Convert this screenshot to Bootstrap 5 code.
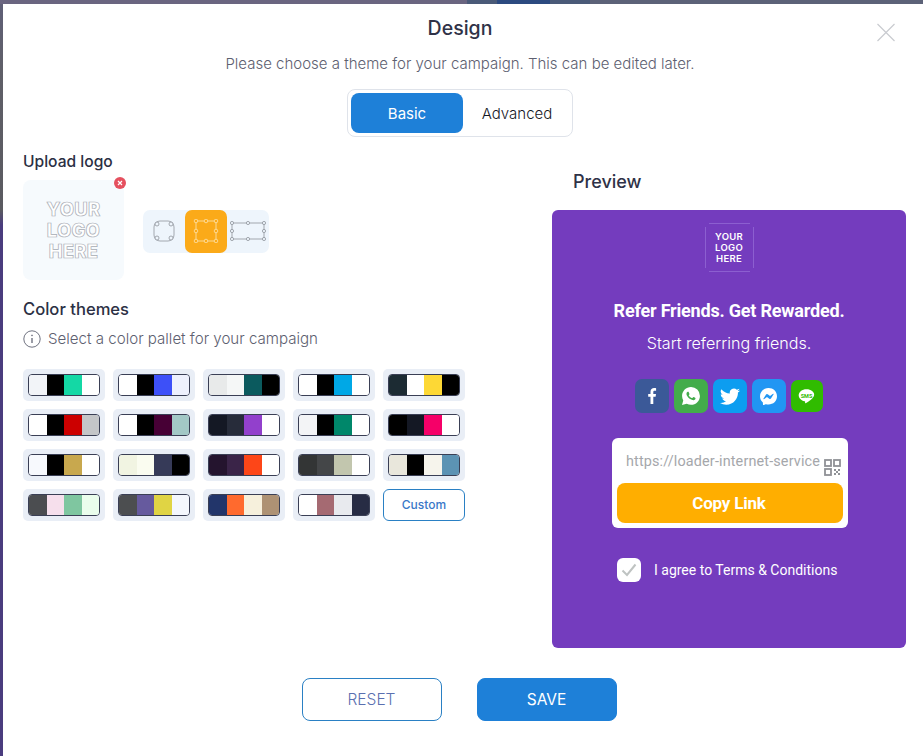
<!DOCTYPE html>
<html lang="en">
<head>
    <meta charset="UTF-8">
    <title>Design</title>
    <link href="https://cdn.jsdelivr.net/npm/bootstrap@5.3.0/dist/css/bootstrap.min.css" rel="stylesheet">
    <style>
        html, body { height: 756px; overflow: hidden; }
        body {
            font-family: Inter, "Liberation Sans", sans-serif;
            background: linear-gradient(to bottom, #5f5f78 0, #5f5f68 70px, #5a5a60 210px, #4a3c7e 225px, #4a3c7e 100%);
        }
        .top-band {
            height: 4px;
            background: linear-gradient(to right, #6a6580 0, #6a6580 467px, #4a5a78 467px, #4a5a78 497px, #2c4a80 497px, #2c4a80 550px, #4a5a78 550px, #4a5a78 590px, #5c6278 590px, #5c6278 100%);
        }
        .dialog { margin-left: 3px; height: 752px; background: #fff; }
        .dialog-head { padding-right: 6px; }
        .dialog-title { font-size: 19.500px; font-weight: 500; line-height: 24px; color: #2f3247; padding-top: 12px; margin: 0; }
        .dialog-sub { font-size: 15px; line-height: 22px; font-weight: 300; color: #5d6070; margin: 13px 0 0; }
        .close-x { position: absolute; right: 27px; top: 18px; width: 20px; height: 20px; }
        .mode-toggle { width: 226px; height: 48px; margin-top: 14px; padding: 3px; border: 1px solid #dfe3ea; border-radius: 8px; }
        .mode-toggle .btn { height: 40px; padding: 2px 0 0; font-size: 15px; font-weight: 300; border: 0; border-radius: 8px; color: #16181f; }
        .mode-toggle .btn.is-on { flex: 0 0 112px; background: #1e80d8; color: #fff; font-weight: 400; }
        .mode-toggle .btn:not(.is-on) { flex: 0 0 108px; }
        .dialog-main { margin-top: 14px; padding: 0 17px 0 20px; height: 497px; }
        .sect-title { font-size: 15.600px; font-weight: 500; line-height: 20px; color: #2b3044; margin: 0; }
        .upload-title { padding-top: 1px; margin-bottom: 8px; }
        .color-title { margin-top: 19px; font-size: 16.600px; }
        .logo-drop { position: relative; width: 101px; height: 100px; background: #f6fafd; border-radius: 8px; }
        .logo-ghost {
            font-weight: 800; font-size: 18.500px; line-height: 21px; letter-spacing: .2px; text-align: center;
            color: #fff; -webkit-text-stroke: .7px #a8acb4;
        }
        .logo-remove { position: absolute; right: -2px; top: -3px; width: 12px; height: 12px; }
        .shape-pick { width: 126px; height: 43px; margin: 2px 0 0 19px; background: #eef5fc; border-radius: 7px; }
        .shape-opt { width: 42px; height: 43px; border-radius: 7px; }
        .shape-opt.is-on { background: #fbaa19; }
        .info-line { font-size: 15.100px; font-weight: 300; line-height: 20px; color: #5d6070; margin-top: 10px; gap: 7px; }
        .swatch-grid { display: grid; grid-template-columns: repeat(5, 82px); grid-auto-rows: 32px; gap: 8px; margin-top: 20px; }
        .swatch-item { padding: 5px; background: #e9eef6; border-radius: 5px; }
        .swatch-bar { display: flex; height: 22px; overflow: hidden; border: 1px solid #3a3f55; border-radius: 4px; }
        .swatch-bar span { flex: 1; }
        .custom-btn { padding: 0; font-size: 12px; font-weight: 500; color: #3a78c8; border: 1px solid #2a80c4; border-radius: 6px; background: #fff; }
        .preview-col { width: 354px; padding-top: 21px; }
        .preview-title { font-size: 18px; font-weight: 500; line-height: 20px; color: #2f3247; margin: 0 0 18px 21px; }
        .preview-box { height: 438px; padding-top: 13px; background: #743cbe; border-radius: 6px; color: #fff; font-family: Roboto, sans-serif; }
        .logo-mini {
            width: 49px; height: 49px; font-family: Inter, sans-serif; font-weight: 600; font-size: 9.500px; line-height: 11px; letter-spacing: .3px;
            background:
                linear-gradient(#8c5fd0, #8c5fd0) 4px 0 / 41px 1px no-repeat,
                linear-gradient(#8c5fd0, #8c5fd0) 4px 100% / 41px 1px no-repeat,
                linear-gradient(#8c5fd0, #8c5fd0) 0 4px / 1px 41px no-repeat,
                linear-gradient(#8c5fd0, #8c5fd0) 100% 4px / 1px 41px no-repeat;
        }
        .preview-head { font-size: 18px; font-weight: 700; line-height: 24px; margin: 27px 0 0; letter-spacing: -.2px; }
        .preview-sub { font-family: Inter, sans-serif; font-size: 16.100px; font-weight: 300; line-height: 22px; margin: 9px 0 0; }
        .share-row { gap: 5px; margin-top: 25px; height: 34px; padding-right: 1px; }
        .share-btn { width: 34px; height: 34px; border-radius: 7px; }
        .share-btn svg { display: block; }
        .share-sms { width: 32px; height: 32px; }
        .link-box { position: relative; width: 236px; height: 90px; margin: 25px 0 0 2px; padding: 5px; background: #fff; border-radius: 6px; }
        .link-text { width: 206px; height: 40px; padding-left: 9px; overflow: hidden; white-space: nowrap; font-size: 14.400px; line-height: 38px; letter-spacing: .15px; color: #a5a7ab; }
        .qr-icon { position: absolute; right: 7px; top: 21px; }
        .copy-btn { width: 226px; height: 40px; padding: 2px 2px 0 0; font-size: 17px; font-weight: 700; letter-spacing: -.2px; color: #fff; background: #ffae00; border: 0; border-radius: 8px; }
        .agree-row { margin: 30px 0 0 65px; gap: 13px; font-size: 14px; }
        .agree-box { width: 24px; height: 24px; background: #fff; border-radius: 6px; }
        .foot-btns { gap: 35px; margin-top: 30px; padding-right: 8px; }
        .foot-btns .btn { width: 140px; height: 43px; padding: 0; font-size: 15.500px; border-radius: 8px; }
        .btn-reset { color: #5a70b0; border: 1px solid #2a80c4; background: #fff; font-weight: 300; }
        .btn-save { color: #fff; background: #1e80d8; border: 1px solid #1e80d8; }
    </style>
</head>
<body>

<div class="top-band"></div>
<div class="dialog position-relative">
    <div class="dialog-head d-flex flex-column align-items-center text-center">
        <h1 class="dialog-title">Design</h1>
        <p class="dialog-sub">Please choose a theme for your campaign. This can be edited later.</p>
        <div class="mode-toggle d-flex">
            <button type="button" class="btn is-on">Basic</button>
            <button type="button" class="btn">Advanced</button>
        </div>
    </div>
    <svg class="close-x" viewBox="0 0 20 20" fill="none" stroke="#c9cbd0" stroke-width="1.2"><path d="M1.500 2 18.500 19M18.500 2 1.500 19"/></svg>

    <div class="dialog-main d-flex justify-content-between">
        <div>
            <h2 class="sect-title upload-title">Upload logo</h2>
            <div class="d-flex align-items-center">
                <div class="logo-drop d-flex align-items-center justify-content-center">
                    <div class="logo-ghost">YOUR<br>LOGO<br>HERE</div>
                    <svg class="logo-remove" viewBox="0 0 12 12"><circle cx="6" cy="6" r="6" fill="#e5505f"/><path d="M4 4l4 4M8 4l-4 4" stroke="#fff" stroke-width="1.2"/></svg>
                </div>
                <div class="shape-pick d-flex">
                    <div class="shape-opt d-flex align-items-center justify-content-center">
                        <svg width="24" height="24" viewBox="0 0 24 24" fill="none" stroke="#8f949c" stroke-width=".8">
                            <rect x="2" y="2" width="20" height="20" rx="6"/>
                            <g fill="#eef5fc"><circle cx="5" cy="5" r="2"/><circle cx="19" cy="5" r="2"/><circle cx="5" cy="19" r="2"/><circle cx="19" cy="19" r="2"/></g>
                        </svg>
                    </div>
                    <div class="shape-opt is-on d-flex align-items-center justify-content-center">
                        <svg width="26" height="24" viewBox="0 0 26 24" fill="none" stroke="#fde3ae" stroke-width=".8">
                            <rect x="3" y="2" width="20" height="20"/>
                            <g fill="#fbaa19"><circle cx="3" cy="2" r="1.800"/><circle cx="13" cy="2" r="1.800"/><circle cx="23" cy="2" r="1.800"/><circle cx="3" cy="12" r="1.800"/><circle cx="23" cy="12" r="1.800"/><circle cx="3" cy="22" r="1.800"/><circle cx="13" cy="22" r="1.800"/><circle cx="23" cy="22" r="1.800"/></g>
                        </svg>
                    </div>
                    <div class="shape-opt d-flex align-items-center justify-content-center">
                        <svg width="36" height="22" viewBox="0 0 36 22" fill="none" stroke="#8f949c" stroke-width=".8">
                            <rect x="2" y="3" width="32" height="16"/>
                            <g fill="#eef5fc"><circle cx="2" cy="3" r="1.600"/><circle cx="18" cy="3" r="1.600"/><circle cx="34" cy="3" r="1.600"/><circle cx="2" cy="11" r="1.600"/><circle cx="34" cy="11" r="1.600"/><circle cx="2" cy="19" r="1.600"/><circle cx="18" cy="19" r="1.600"/><circle cx="34" cy="19" r="1.600"/></g>
                        </svg>
                    </div>
                </div>
            </div>
            <h2 class="sect-title color-title">Color themes</h2>
            <div class="info-line d-flex align-items-center">
                <svg width="18" height="18" viewBox="0 0 18 18" fill="none" stroke="#6f7280" stroke-width="1"><circle cx="9" cy="9" r="8.200"/><path d="M9 8v5" stroke-width="1.400"/><circle cx="9" cy="5.400" r=".5" stroke-width="1"/></svg>
                <span>Select a color pallet for your campaign</span>
            </div>
            <div class="swatch-grid" id="swatches"></div>
        </div>

        <div class="preview-col">
            <h2 class="preview-title">Preview</h2>
            <div class="preview-box d-flex flex-column align-items-center text-center">
                <div class="logo-mini d-flex align-items-center justify-content-center">YOUR<br>LOGO<br>HERE</div>
                <div class="preview-head">Refer Friends. Get Rewarded.</div>
                <div class="preview-sub">Start referring friends.</div>
                <div class="share-row d-flex align-items-center">
                    <div class="share-btn d-flex align-items-center justify-content-center" style="background:#3b5998">
                        <svg width="16" height="16" viewBox="0 0 16 16" fill="#fff"><path d="M9.300 16V8.700h2.300l.4-2.800H9.300V4.100c0-.8.2-1.400 1.400-1.400H12.100V.2C11.800.1 11 0 10.100 0 8 0 6.500 1.300 6.500 3.700v2.200H4.200v2.800h2.300V16z"/></svg>
                    </div>
                    <div class="share-btn d-flex align-items-center justify-content-center" style="background:#43ac4b">
                        <svg width="18" height="18" viewBox="0 0 16 16">
                            <path fill="#fff" d="M13.601 2.326A7.854 7.854 0 0 0 7.994 0C3.627 0 .068 3.558.064 7.926c0 1.399.366 2.76 1.057 3.965L0 16l4.204-1.102a7.933 7.933 0 0 0 3.79.965h.004c4.368 0 7.926-3.558 7.93-7.93A7.898 7.898 0 0 0 13.6 2.326z"/>
                            <path fill="#43ac4b" d="M11.609 9.587c-.197-.099-1.17-.578-1.353-.646-.182-.065-.315-.099-.445.099-.133.197-.513.646-.627.775-.114.133-.232.148-.43.05-.197-.1-.836-.308-1.592-.985-.59-.525-.985-1.175-1.103-1.372-.114-.198-.011-.304.088-.403.087-.088.197-.232.296-.346.1-.114.133-.198.198-.33.065-.134.034-.248-.015-.347-.05-.099-.445-1.076-.612-1.47-.16-.389-.323-.335-.445-.34-.114-.007-.247-.007-.38-.007a.729.729 0 0 0-.529.247c-.182.198-.691.677-.691 1.654 0 .977.71 1.916.81 2.049.098.133 1.394 2.132 3.383 2.992.47.205.84.326 1.129.418.475.152.904.129 1.246.08.38-.058 1.171-.48 1.338-.943.164-.464.164-.86.114-.943-.049-.084-.182-.133-.38-.232z"/>
                        </svg>
                    </div>
                    <div class="share-btn d-flex align-items-center justify-content-center" style="background:#0d9df0">
                        <svg width="20" height="20" viewBox="0 0 16 16" fill="#fff"><path d="M5.026 15c6.038 0 9.341-5.003 9.341-9.334 0-.14 0-.282-.006-.422A6.685 6.685 0 0 0 16 3.542a6.658 6.658 0 0 1-1.889.518 3.301 3.301 0 0 0 1.447-1.817 6.533 6.533 0 0 1-2.087.793A3.286 3.286 0 0 0 7.875 6.030a9.325 9.325 0 0 1-6.767-3.429 3.289 3.289 0 0 0 1.018 4.382A3.323 3.323 0 0 1 .64 6.575v.045a3.288 3.288 0 0 0 2.632 3.218 3.203 3.203 0 0 1-.865.115 3.23 3.23 0 0 1-.614-.057 3.283 3.283 0 0 0 3.067 2.277A6.588 6.588 0 0 1 .78 13.58a6.32 6.32 0 0 1-.78-.045A9.344 9.344 0 0 0 5.026 15z"/></svg>
                    </div>
                    <div class="share-btn d-flex align-items-center justify-content-center" style="background:#2196f3">
                        <svg width="17" height="17" viewBox="0 0 16 16" fill="#fff"><path d="M0 7.760C0 3.301 3.493 0 8 0s8 3.301 8 7.760-3.493 7.760-8 7.760c-.81 0-1.586-.107-2.316-.307a.639.639 0 0 0-.427.03l-1.588.702a.64.64 0 0 1-.898-.566l-.044-1.423a.639.639 0 0 0-.215-.456C.956 12.108 0 10.092 0 7.760zm5.546-1.459-2.35 3.728c-.225.358.214.761.551.506l2.525-1.916a.48.48 0 0 1 .578-.002l1.869 1.402a1.200 1.200 0 0 0 1.735-.32l2.35-3.728c.226-.358-.214-.761-.551-.506L9.728 7.381a.48.48 0 0 1-.578.002L7.281 5.980a1.200 1.200 0 0 0-1.735.32z"/></svg>
                    </div>
                    <div class="share-btn share-sms d-flex align-items-center justify-content-center" style="background:#30bc00">
                        <svg width="17" height="16" viewBox="0 0 20 18"><path d="M10 1C4.800 1 .8 4.200.8 8.200c0 3.500 3 6.300 7 7 .6.100.7.300.6.900l-.1.900c0 .4.300.6.700.4 1.500-.7 6-3.500 8-5.900 1.200-1.300 2-2.600 2-4.200C19.200 4.200 15.200 1 10 1z" fill="#fff"/><text x="10" y="10.800" text-anchor="middle" font-family="Roboto, sans-serif" font-size="6.500" font-weight="700" fill="#30bc00">SMS</text></svg>
                    </div>
                </div>
                <div class="link-box">
                    <div class="link-text text-start">https://loader-internet-service</div>
                    <svg class="qr-icon" width="17" height="17" viewBox="0 0 17 17" fill="none" stroke="#8f9196" stroke-width="1.800">
                        <rect x="1" y="1" width="6" height="6"/><rect x="10" y="1" width="6" height="6"/><rect x="1" y="10" width="6" height="6"/>
                        <path d="M10 10h2v2h-2zM14 10h2v2h-2zM12 12h2v2h-2zM10 14h2v2h-2zM14 14h2v2h-2z" fill="#8f9196" stroke="none"/>
                    </svg>
                    <button type="button" class="btn copy-btn">Copy Link</button>
                </div>
                <div class="agree-row d-flex align-items-center align-self-start">
                    <span class="agree-box d-flex align-items-center justify-content-center">
                        <svg width="16" height="14" viewBox="0 0 16 14" fill="none" stroke="#bfc3c2" stroke-width="2"><path d="M1.500 7.500 6 12 14.500 1.500"/></svg>
                    </span>
                    <span>I agree to Terms &amp; Conditions</span>
                </div>
            </div>
        </div>
    </div>

    <div class="foot-btns d-flex justify-content-center">
        <button type="button" class="btn btn-reset">RESET</button>
        <button type="button" class="btn btn-save">SAVE</button>
    </div>
</div>

<script>
    const palettes = [
        ["#f2f4f8", "#000", "#14d8a5", "#fff"], ["#fff", "#000", "#3d50f8", "#eef1fd"], ["#e8eaea", "#f5f7f7", "#0b5a5e", "#000"], ["#fff", "#000", "#00a8e6", "#fff"], ["#1c2b33", "#fff", "#fdd835", "#000"],
        ["#fff", "#000", "#cc0000", "#c4c6c8"], ["#fff", "#000", "#470035", "#a3c8c6"], ["#141824", "#272c3a", "#9240cc", "#fff"], ["#f3f4f6", "#000", "#00876a", "#fff"], ["#000", "#141824", "#f50068", "#fff"],
        ["#f7f9fd", "#000", "#c8a84e", "#fff"], ["#f1f4e2", "#fafcf0", "#363a58", "#000"], ["#24142e", "#3a2448", "#fd4618", "#fff"], ["#333535", "#444648", "#c2c6ae", "#fff"], ["#e9e7dc", "#000", "#f6f4ec", "#5c93b4"],
        ["#4b4d50", "#f6dfec", "#7fc6a0", "#eafdec"], ["#4c4e50", "#665a9e", "#e0d444", "#f4f7fd"], ["#22356a", "#ff6a2e", "#f6f0dc", "#ae9274"], ["#fff", "#a56a72", "#e8eaee", "#272c44"]
    ];
    const grid = document.getElementById("swatches");
    grid.innerHTML = palettes.map(p => `
        <div class="swatch-item"><div class="swatch-bar">${p.map(c => `<span style="background:${c}"></span>`).join('')}</div></div>
    `).join('') + `<button type="button" class="btn custom-btn">Custom</button>`;
</script>
<script src="https://cdn.jsdelivr.net/npm/bootstrap@5.3.0/dist/js/bootstrap.bundle.min.js"></script>
</body>
</html>
